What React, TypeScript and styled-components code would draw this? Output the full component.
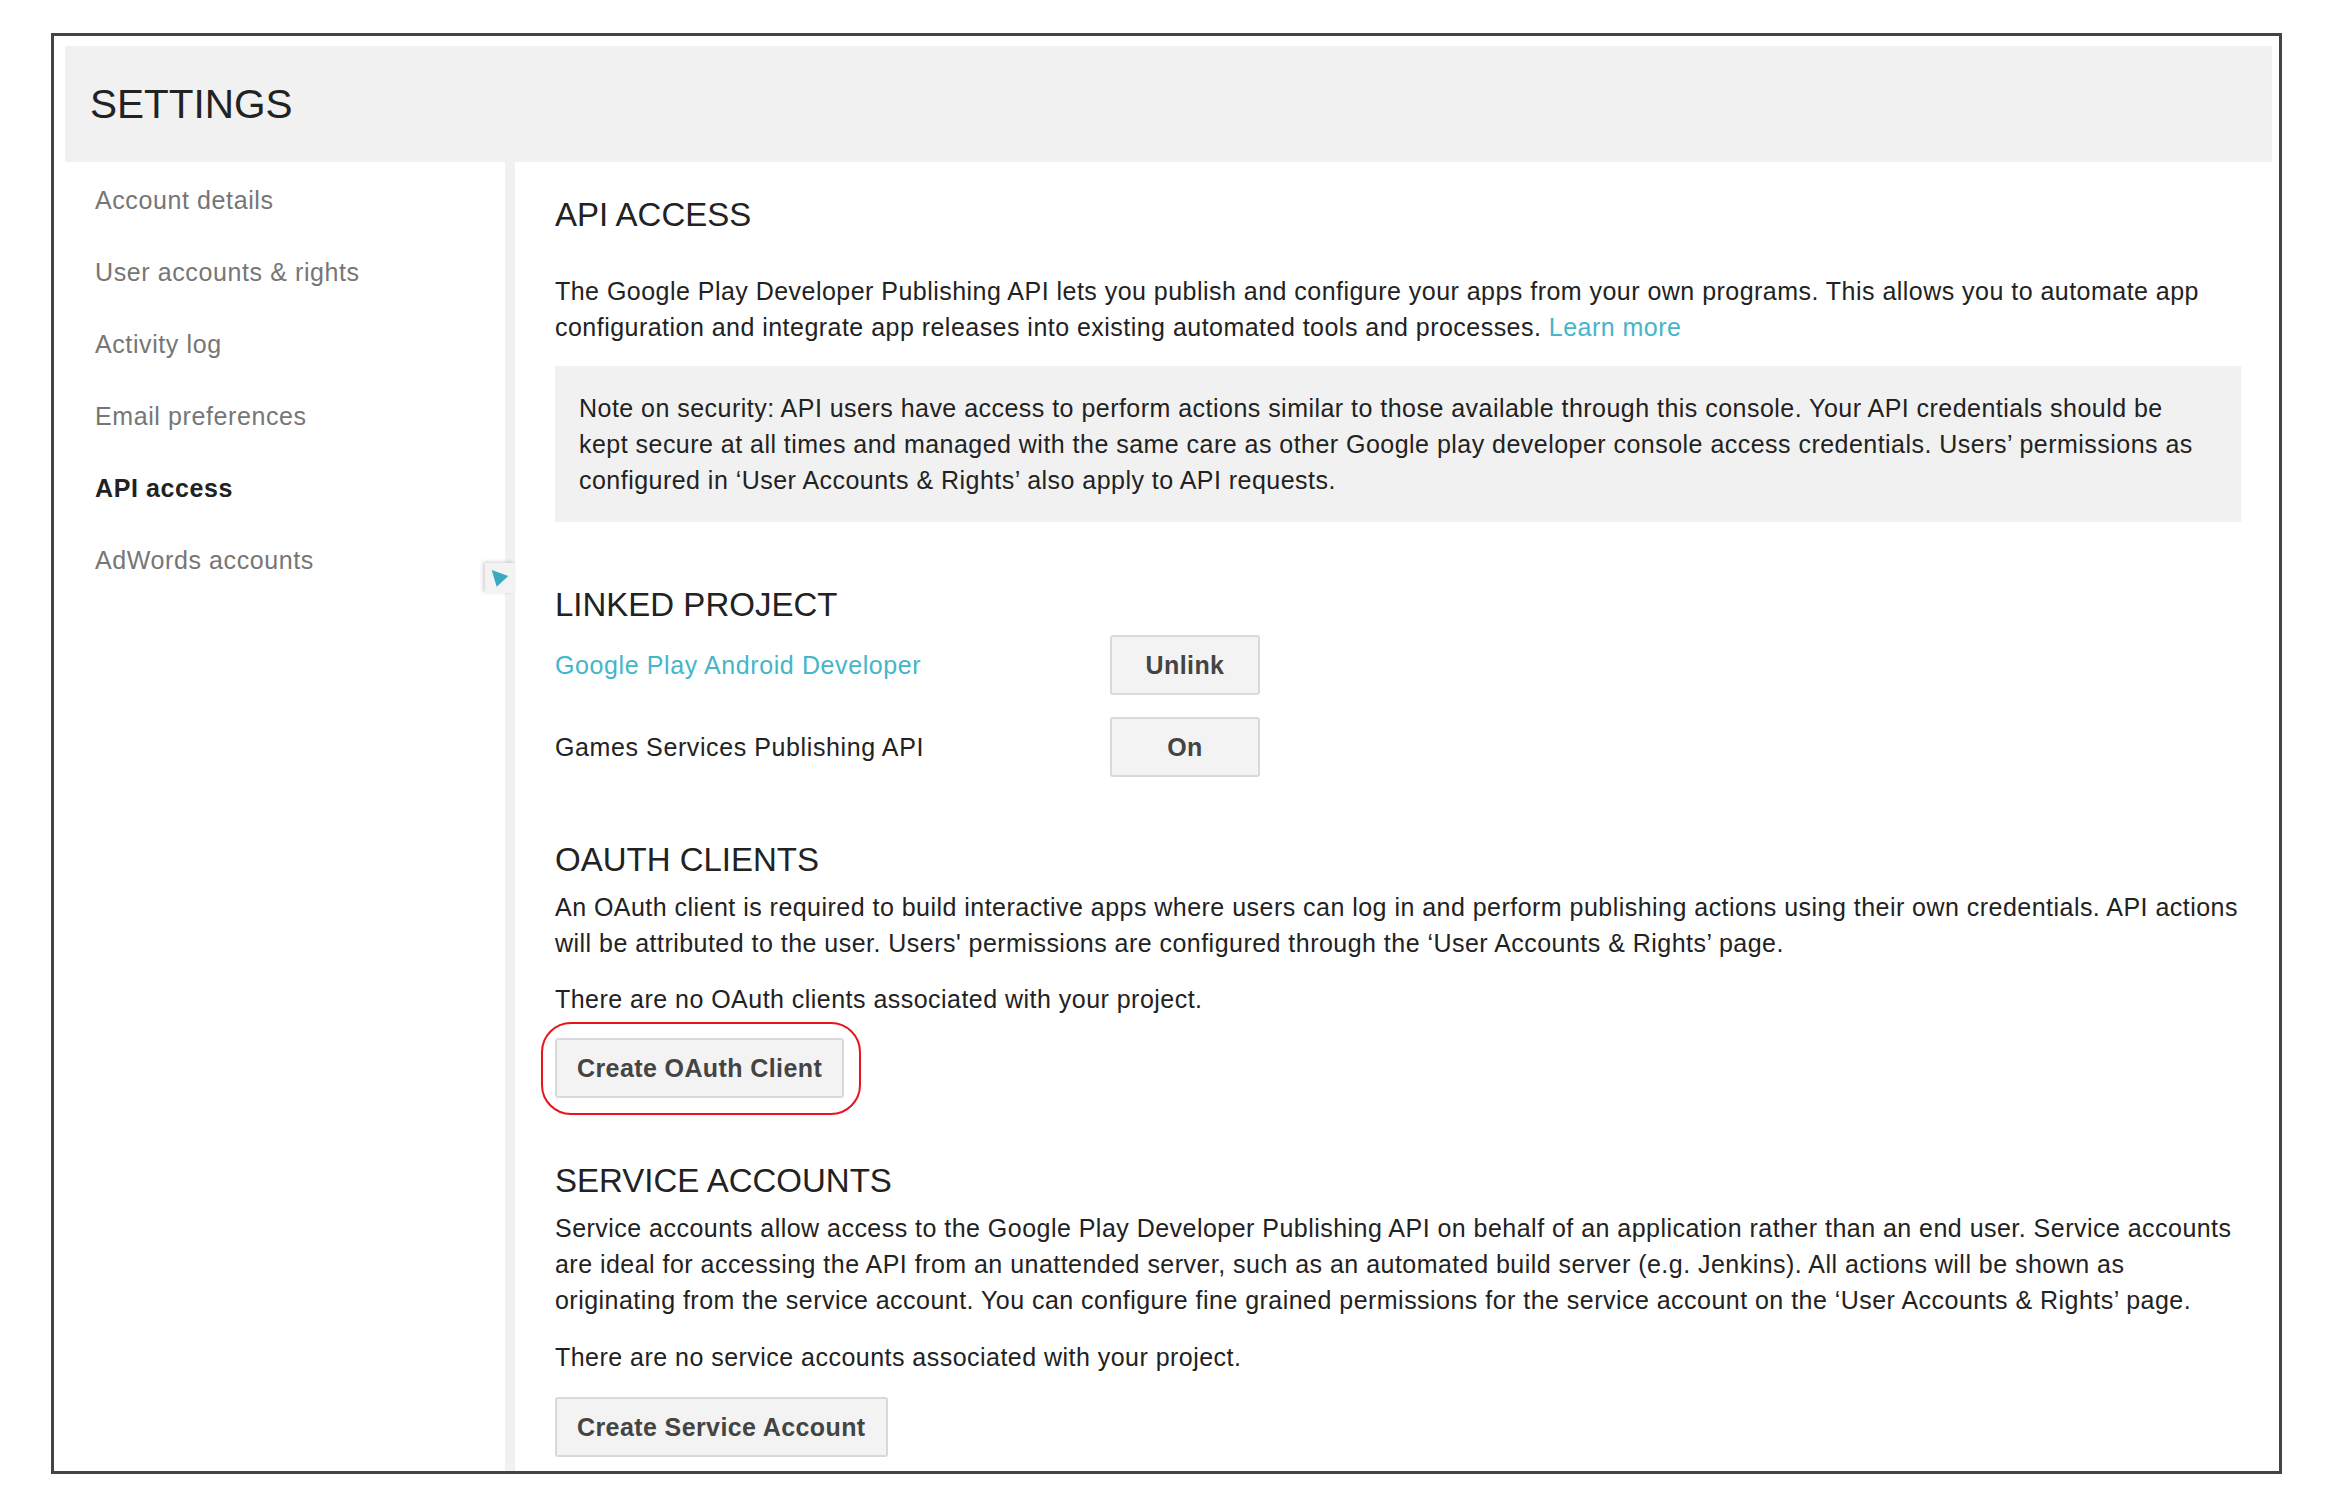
import styled, { createGlobalStyle } from 'styled-components';

const GlobalStyle = createGlobalStyle`
  html, body {
    margin: 0;
    padding: 0;
    background: #ffffff;
  }
  body {
    font-family: "Liberation Sans", Arial, Helvetica, sans-serif;
    color: #222222;
  }
`;

const Page = styled.div`
  padding: 33px 0 0 51px;
`;

const Frame = styled.div`
  box-sizing: border-box;
  width: 2231px;
  height: 1441px;
  border: 3px solid #444444;
  padding: 10px 7px 0 11px;
  display: flex;
  flex-direction: column;
  overflow: hidden;
`;

const Header = styled.header`
  height: 116px;
  flex-shrink: 0;
  background: #f1f1f1;
  padding-left: 25px;
  display: flex;
  align-items: center;
`;

const Title = styled.h1`
  margin: 0;
  font-size: 40.5px;
  font-weight: 400;
  color: #222222;
  line-height: 1;
`;

const Body = styled.div`
  flex: 1;
  display: flex;
  min-height: 0;
`;

const Sidebar = styled.nav`
  position: relative;
  box-sizing: border-box;
  width: 450px;
  flex-shrink: 0;
  padding-top: 2px;
  border-right: 10px solid #f1f1f1;
`;

const NavItem = styled.div<{ $active?: boolean }>`
  padding-left: 30px;
  font-size: 25px;
  letter-spacing: 0.6px;
  line-height: 72px;
  color: ${(p) => (p.$active ? '#222222' : '#767676')};
  font-weight: ${(p) => (p.$active ? 700 : 400)};
`;

const Toggle = styled.div`
  position: absolute;
  left: 420px;
  top: 401px;
  width: 30px;
  height: 30px;
  background: #f3f3f3;
  box-shadow: -2px -1px 4px rgba(0, 0, 0, 0.18);
`;

const Content = styled.main`
  flex: 1;
  min-width: 0;
  padding: 33px 31px 0 40px;
`;

const Section = styled.section`
  & + & {
    margin-top: 63px;
  }
`;

const Heading = styled.h2`
  margin: 0;
  font-size: 33px;
  line-height: 40px;
  font-weight: 400;
  color: #222222;
`;

const Text = styled.p<{ $gap?: number }>`
  margin: ${(p) => p.$gap ?? 0}px 0 0;
  font-size: 25px;
  letter-spacing: 0.47px;
  line-height: 36px;
  white-space: nowrap;
  color: #222222;
`;

const Link = styled.a`
  color: #45b5c9;
  text-decoration: none;
  cursor: pointer;
`;

const Note = styled.div`
  margin-top: 21px;
  background: #f1f1f1;
  padding: 24px 24px;
  font-size: 25px;
  letter-spacing: 0.47px;
  line-height: 36px;
  white-space: nowrap;
  color: #222222;
`;

const LinkedGrid = styled.div`
  margin-top: 10px;
  display: grid;
  grid-template-columns: 555px 150px;
  row-gap: 22px;
  align-items: center;
  font-size: 25px;
  letter-spacing: 0.6px;
`;

const Button = styled.button<{ $width?: number }>`
  box-sizing: border-box;
  height: 60px;
  width: ${(p) => (p.$width ? `${p.$width}px` : 'auto')};
  padding: 0 20px;
  background: #f3f3f3;
  border: 2px solid #d9d9d9;
  border-radius: 3px;
  font-family: "Liberation Sans", Arial, Helvetica, sans-serif;
  font-size: 25px;
  letter-spacing: 0.4px;
  font-weight: 700;
  color: #444444;
  cursor: pointer;
`;

const ButtonRow = styled.div<{ $gap: number }>`
  margin-top: ${(p) => p.$gap}px;
`;

const Highlight = styled.span`
  position: relative;
  display: inline-block;

  &::after {
    content: '';
    position: absolute;
    top: -16px;
    left: -14px;
    right: -17px;
    bottom: -17px;
    border: 2px solid #e8141b;
    border-radius: 30px;
    pointer-events: none;
  }
`;

const navItems = [
  'Account details',
  'User accounts & rights',
  'Activity log',
  'Email preferences',
  'API access',
  'AdWords accounts',
];

function App() {
  return (
    <Page>
      <GlobalStyle />
      <Frame>
        <Header>
          <Title>SETTINGS</Title>
        </Header>
        <Body>
          <Sidebar>
            {navItems.map((item) => (
              <NavItem key={item} $active={item === 'API access'}>
                {item}
              </NavItem>
            ))}
            <Toggle>
              <svg width="30" height="30" viewBox="0 0 30 30">
                <polygon points="6.7,7 23.3,13 11.7,23.7" fill="#39a9bf" />
              </svg>
            </Toggle>
          </Sidebar>

          <Content>
            <Section>
              <Heading>API ACCESS</Heading>
              <Text $gap={38}>
                The Google Play Developer Publishing API lets you publish and configure your apps
                from your own programs. This allows you to automate app
                <br />
                configuration and integrate app releases into existing automated tools and
                processes. <Link>Learn more</Link>
              </Text>
              <Note>
                Note on security: API users have access to perform actions similar to those
                available through this console. Your API credentials should be
                <br />
                kept secure at all times and managed with the same care as other Google play
                developer console access credentials. Users’ permissions as
                <br />
                configured in ‘User Accounts &amp; Rights’ also apply to API requests.
              </Note>
            </Section>

            <Section>
              <Heading>LINKED PROJECT</Heading>
              <LinkedGrid>
                <Link>Google Play Android Developer</Link>
                <Button $width={150}>Unlink</Button>
                <span>Games Services Publishing API</span>
                <Button $width={150}>On</Button>
              </LinkedGrid>
            </Section>

            <Section>
              <Heading>OAUTH CLIENTS</Heading>
              <Text $gap={9}>
                An OAuth client is required to build interactive apps where users can log in and
                perform publishing actions using their own credentials. API actions
                <br />
                will be attributed to the user. Users' permissions are configured through the ‘User
                Accounts &amp; Rights’ page.
              </Text>
              <Text $gap={20}>There are no OAuth clients associated with your project.</Text>
              <ButtonRow $gap={21}>
                <Highlight>
                  <Button>Create OAuth Client</Button>
                </Highlight>
              </ButtonRow>
            </Section>

            <Section>
              <Heading>SERVICE ACCOUNTS</Heading>
              <Text $gap={9}>
                Service accounts allow access to the Google Play Developer Publishing API on behalf
                of an application rather than an end user. Service accounts
                <br />
                are ideal for accessing the API from an unattended server, such as an automated
                build server (e.g. Jenkins). All actions will be shown as
                <br />
                originating from the service account. You can configure fine grained permissions
                for the service account on the ‘User Accounts &amp; Rights’ page.
              </Text>
              <Text $gap={21}>There are no service accounts associated with your project.</Text>
              <ButtonRow $gap={22}>
                <Button>Create Service Account</Button>
              </ButtonRow>
            </Section>
          </Content>
        </Body>
      </Frame>
    </Page>
  );
}

export default App;
